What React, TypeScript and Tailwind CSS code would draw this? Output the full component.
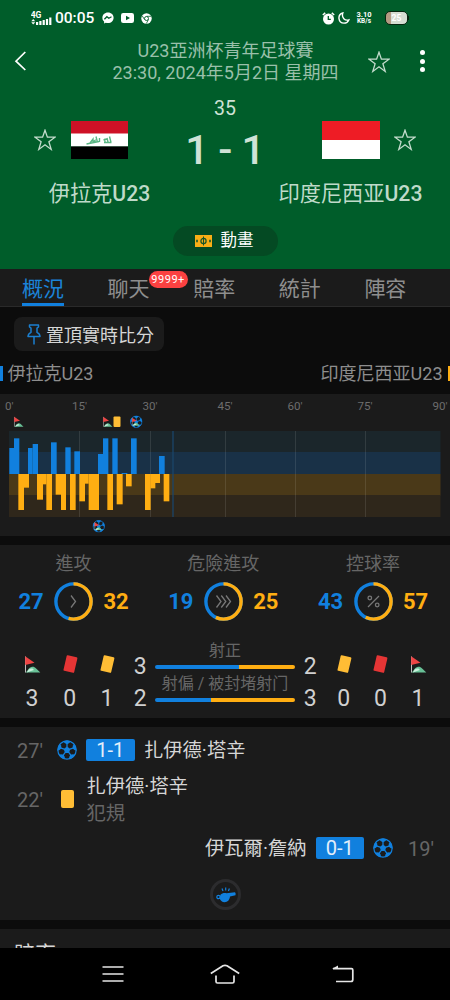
import { clsx } from 'clsx'

const BLUE = '#1180de'
const AMBER = '#ffae12'

// [x, width, height] on a 3x grid, measured from the middle line
const homeBars = [
  [28, 14, 78], [42, 16, 107], [84, 14, 78], [98, 16, 90], [153, 17, 95], [196, 16, 80],
  [223, 17, 68], [294, 15, 60], [309, 16, 107], [337, 16, 107], [365, 17, 3], [393, 17, 107], [477, 17, 54],
]

const awayBars = [
  [55, 17, 108], [72, 15, 41], [111, 18, 77], [129, 10, 31], [139, 17, 108], [167, 16, 62],
  [183, 15, 108], [210, 17, 108], [238, 17, 82], [255, 11, 29], [266, 31, 108], [322, 17, 108],
  [350, 18, 91], [378, 17, 37], [435, 17, 108], [451, 15, 43], [465, 15, 27], [491, 17, 82],
]

const ticks = [
  { x: 5, label: "0'" },
  { x: 72, label: "15'" },
  { x: 142.5, label: "30'" },
  { x: 217.5, label: "45'" },
  { x: 287.5, label: "60'" },
  { x: 357.5, label: "75'" },
  { x: 432.5, label: "90'" },
]

const tabs = [
  { name: '概況', active: true },
  { name: '聊天', badge: '9999+' },
  { name: '賠率' },
  { name: '統計' },
  { name: '陣容' },
]

const rings = [
  { title: '進攻', home: 27, away: 32, icon: 'single' },
  { title: '危險進攻', home: 19, away: 25, icon: 'triple' },
  { title: '控球率', home: 43, away: 57, icon: 'percent' },
]

function Star() {
  return (
    <svg width="22" height="22" viewBox="0 0 22 22" fill="none" stroke="#c3dccd" strokeWidth="1.3" className="shrink-0">
      <path d="M11 1.2 L13.4 8.2 H21 L14.9 12.7 L17.2 20.4 L11 15.8 L4.8 20.4 L7.1 12.7 L1 8.2 H8.6 Z" />
    </svg>
  )
}

function CornerFlag({ size = 17, x, y }: { size?: number; x?: number; y?: number }) {
  return (
    <svg x={x} y={y} width={size} height={size} viewBox="0 0 17 17">
      <path d="M1.5 16.5 C3.5 15.5 4.5 11.5 8 10.8 C11 10.3 12.5 13 16.3 16.5 Z" fill="#69c197" />
      <path d="M3 16.5 C4 13 6 12 8.5 12.5 L10 14 L7 15 Z" fill="#c9f0dc" />
      <path d="M1.5 0.5 V16.5" stroke="#bdbdbd" strokeWidth="1" />
      <path d="M1.2 0.3 L10.5 6.7 L1.2 9 Z" fill="#ef4444" />
    </svg>
  )
}

function Ball({ size = 20, x, y }: { size?: number; x?: number; y?: number }) {
  return (
    <svg x={x} y={y} width={size} height={size} viewBox="0 0 20 20">
      <circle cx="10" cy="10" r="9.2" fill="none" stroke={BLUE} strokeWidth="1.2" />
      <path d="M10 6.6 L13.3 9 L12 12.9 H8 L6.7 9 Z" fill={BLUE} />
      {[0, 72, 144, 216, 288].map((a) => (
        <g key={a} transform={`rotate(${a} 10 10)`}>
          <path d="M10 7 V3" stroke={BLUE} strokeWidth="1.3" />
          <path d="M6.3 1.2 Q10 -0.2 13.7 1.2 L12.4 3 L10 4.2 L7.6 3 Z" fill={BLUE} />
        </g>
      ))}
    </svg>
  )
}

function TiltedCard({ red }: { red?: boolean }) {
  return <div className={clsx('mb-[5px] h-[15.5px] w-[10.5px] rotate-[13deg] rounded-[1px]', red ? 'bg-[#e53535]' : 'bg-[#ffbd35]')} />
}

function StatusBar() {
  return (
    <div className="flex h-9 items-center pl-[31px] pr-[41px] text-white">
      <svg width="21" height="15" viewBox="0 0 21 15" fill="#fff">
        <text x="-0.3" y="6.5" fontSize="8.5" fontWeight="700" fontFamily="Roboto, sans-serif">4G</text>
        <path d="M0.3 10.2 L2.2 8 L4.2 10.2 Z" />
        <path d="M0.3 11.2 L2.2 13.5 L4.2 11.2 Z" />
        <rect x="5" y="11" width="2.2" height="3" />
        <rect x="8.3" y="10" width="2.2" height="4" />
        <rect x="11.6" y="9" width="2.2" height="5" />
        <rect x="14.9" y="8" width="2.2" height="6" />
        <rect x="18.2" y="6.5" width="2.2" height="7.5" />
      </svg>
      <span className="ml-[3px] w-[41px] pt-px text-[15.5px] font-medium leading-none">00:05</span>
      <svg width="12" height="12" viewBox="0 0 12 12" className="ml-[6px]">
        <path d="M6 .4C2.7.4.4 2.8.4 5.7c0 1.6.6 2.9 1.7 3.8v1.9l1.7-.7c.7.2 1.4.3 2.2.3 3.3 0 5.600-2.400 5.600-5.300S9.300.4 6 .4z" fill="#fff" />
        <path d="M2.400 7.200 4.900 4.700l1.900 1.500 2.700-1.500" stroke="#005d2a" strokeWidth="1.300" fill="none" />
      </svg>
      <svg width="13" height="10" viewBox="0 0 13 10" className="ml-[7px]">
        <rect width="13" height="10" rx="2.200" fill="#fff" />
        <path d="M5 2.800v4.400l4-2.200z" fill="#005d2a" />
      </svg>
      <svg width="11" height="11" viewBox="0 0 11 11" className="ml-[7px]">
        <circle cx="5.500" cy="5.500" r="5.200" fill="#fff" />
        <circle cx="5.500" cy="5.500" r="2" fill="none" stroke="#005d2a" strokeWidth=".9" />
        <path d="M5.500 3.300H10M3.500 6.500 1.300 3M7.500 6.500 5.300 10.500" stroke="#005d2a" strokeWidth=".8" />
      </svg>
      <svg width="13" height="13" viewBox="0 0 13 13" className="ml-auto">
        <circle cx="6.500" cy="7" r="5.500" fill="#fff" />
        <path d="M.8 3 3.200.9M12.200 3 9.800.9" stroke="#fff" strokeWidth="1.500" />
        <path d="M6.300 4v3.400h2.500" stroke="#005d2a" strokeWidth="1.300" fill="none" />
      </svg>
      <svg width="12" height="12" viewBox="0 0 12 12" className="ml-[3px]">
        <path d="M4.800 1C2.300 1.700.7 4 1 6.600c.3 2.600 2.400 4.500 5 4.500 2.200 0 4-1.200 4.800-3.200C7 9 3.300 5.800 4.800 1z" fill="none" stroke="#fff" strokeWidth="1.400" />
      </svg>
      <div className="ml-[5px] flex w-[18px] flex-col items-center text-[7.500px] font-bold leading-[7px]">
        <span>3.10</span>
        <span className="text-[6.500px]">KB/s</span>
      </div>
      <div className="ml-3 flex h-[14px] w-[23px] items-center justify-center rounded-[5px] border-[1.500px] border-[#06260f] bg-gradient-to-r from-[#b39a82] from-25% to-[#d5ddd2] to-25% text-[8.500px] font-bold leading-none text-white">
        25
      </div>
      <div className="h-1 w-px bg-[#06260f]" />
    </div>
  )
}

function Header() {
  return (
    <header className="h-[269px] shrink-0 bg-[#005d2a]">
      <StatusBar />
      <div className="flex h-[50px] items-center pl-[14px] pr-[19px]">
        <svg width="13" height="20" viewBox="0 0 13 20" fill="none" stroke="#fff" strokeWidth="1.700">
          <path d="M11.300 1 2 10.200 11.300 19" />
        </svg>
        <div className="ml-[70.500px] w-[256px] pt-[2px] text-center text-[18px] leading-[22px] text-[#9ac0aa]">
          <div>U23亞洲杯青年足球賽</div>
          <div className="whitespace-nowrap">23:30, 2024年5月2日 星期四</div>
        </div>
        <div className="ml-[14.500px] pt-px"><Star /></div>
        <div className="ml-auto flex w-[17px] flex-col items-center gap-[3.500px]">
          <i className="size-[5px] rounded-full bg-white" />
          <i className="size-[5px] rounded-full bg-white" />
          <i className="size-[5px] rounded-full bg-white" />
        </div>
      </div>
      <div className="mt-[11px] h-6 text-center text-[19.500px] leading-6 text-[#cfe2d6]">35</div>
      <div className="flex h-[42px] items-start justify-between px-[34px]">
        <div className="flex items-center gap-[15px]">
          <Star />
          <svg width="57" height="38" viewBox="0 0 57 38">
            <rect width="57" height="13" fill="#ce1126" />
            <rect y="12.500" width="57" height="13" fill="#fff" />
            <rect y="25.500" width="57" height="12.500" fill="#000" />
            <path d="M15.500 23 28 20.500M19 22l3-4v3l2-1.500v2M25 15.500l1.500 6M28.500 17v4M33 21.500h7.500M34 21v-3.500M36 17l1 4M38.500 15.500l1.500 6M32.500 19l3-1" stroke="#58b583" strokeWidth="1.400" fill="none" />
          </svg>
        </div>
        <div className="mt-[8px] whitespace-pre text-[41.500px] font-medium leading-[42px] tracking-[-0.500px] text-[#cfe2d6]">1 - 1</div>
        <div className="flex items-center gap-[14px]">
          <svg width="58" height="38" viewBox="0 0 58 38">
            <rect width="58" height="38" fill="#fff" />
            <rect width="58" height="19" fill="#ee1c25" />
          </svg>
          <Star />
        </div>
      </div>
      <div className="mt-[17.500px] flex h-[26px] justify-between text-[21.200px] leading-[26px] text-[#bfdac9]">
        <div className="w-[199px] text-center">伊拉克<span className="font-medium">U23</span></div>
        <div className="w-[199px] text-center">印度尼西亚<span className="font-medium">U23</span></div>
      </div>
      <div className="mx-auto mt-[19.500px] flex h-[30px] w-[105px] items-center rounded-full bg-[#044a23] pl-[22px]">
        <svg width="17" height="12" viewBox="0 0 17 12">
          <rect width="17" height="12" fill="#f9ae16" />
          <g stroke="#15542a" fill="none">
            <path d="M8.500 1.500v9" strokeWidth="1.100" />
            <circle cx="8.500" cy="6" r="2.600" strokeWidth="1.200" />
            <path d="M2 4.800v2.400M15 4.800v2.400" strokeWidth="1.600" />
          </g>
        </svg>
        <span className="ml-[9px] pt-px text-[16.500px] leading-none text-white">動畫</span>
      </div>
    </header>
  )
}

function Tabs() {
  return (
    <nav className="flex h-[38px] shrink-0 gap-[43.600px] border-b border-[#2a2a2a] bg-[#1b1b1b] pl-[22px]">
      {tabs.map((tab) => (
        <div
          key={tab.name}
          className={clsx(
            'relative w-[42px] whitespace-nowrap border-b-[3px] pt-[2px] text-[21px] leading-[36px]',
            tab.active ? 'border-[#1180de] text-[#1b83d8]' : 'border-transparent text-[#8e8e8e]',
          )}
        >
          {tab.name}
          {tab.badge && (
            <span className="absolute left-[41px] top-[2px] flex h-[17px] w-[39px] items-center justify-center rounded-full bg-[#fb4141] text-[11px] leading-none tracking-[0.500px] text-white">
              {tab.badge}
            </span>
          )}
        </div>
      ))}
    </nav>
  )
}

function Momentum() {
  return (
    <section className="mt-[7px] h-[142px] shrink-0 bg-[#1b1b1b]">
      <svg width="450" height="142" viewBox="0 0 450 142" className="block">
        {ticks.map((t) => (
          <text key={t.label} x={t.x} y="15.500" fontSize="11.600" fill="#6d6d6d">{t.label}</text>
        ))}
        <rect x="9" y="37" width="431.500" height="21.500" fill="#1b262b" />
        <rect x="9" y="58" width="431.500" height="22" fill="#193147" />
        <rect x="9" y="80" width="431.500" height="21.500" fill="#4a3918" />
        <rect x="9" y="101" width="431.500" height="22" fill="#2f271b" />
        {[79.500, 150.500, 225.500, 295.500, 365.500].map((x) => (
          <path key={x} d={`M${x} 37V123`} stroke="#fff" strokeOpacity=".1" />
        ))}
        <path d="M173 37V123" stroke="#1b4569" strokeWidth="1.300" />
        {homeBars.map(([x, w, h]) => (
          <rect key={x} x={x / 3} y={80 - h / 3} width={w / 3} height={h / 3} fill={BLUE} />
        ))}
        {awayBars.map(([x, w, h]) => (
          <rect key={x} x={x / 3} y={80} width={w / 3} height={h / 3} fill={AMBER} />
        ))}
        <CornerFlag x={13.500} y={22.500} size={10.500} />
        <CornerFlag x={102.500} y={22.500} size={10.500} />
        <rect x="113.500" y="22.500" width="7" height="10.500" rx="1" fill="#ffbd35" />
        <Ball x={130} y={21.500} size={12.500} />
        <CornerFlag x={131.500} y={23.500} size={8.500} />
        <Ball x={92.500} y={126} size={12.500} />
        <CornerFlag x={94} y={128} size={8.500} />
      </svg>
    </section>
  )
}

function Ring({ home, away, icon }: { home: number; away: number; icon: string }) {
  const len = 2 * Math.PI * 17.600
  const part = (len * away) / (home + away)
  return (
    <svg width="39" height="39" viewBox="0 0 39 39" fill="none">
      <circle cx="19.500" cy="19.500" r="17.600" stroke={BLUE} strokeWidth="3.400" />
      <circle
        cx="19.500" cy="19.500" r="17.600" stroke={AMBER} strokeWidth="3.400"
        strokeDasharray={`${part} ${len - part}`} transform="rotate(-90 19.500 19.500)"
      />
      <g stroke="#777" strokeWidth="1.300">
        {icon === 'single' && <path d="M17 13.500 21.500 19.500 17 25.500" />}
        {icon === 'triple' && <path d="M12.500 13.500 17 19.500 12.500 25.500M17.300 13.500 21.800 19.500 17.300 25.500M22 13.500 26.500 19.500 22 25.500" />}
        {icon === 'percent' && (
          <>
            <path d="M25 14 14 25" />
            <circle cx="15.800" cy="16" r="1.800" />
            <circle cx="23.200" cy="23" r="1.800" />
          </>
        )}
      </g>
    </svg>
  )
}

function SplitBar({ label, home, away }: { label: string; home: number; away: number }) {
  const total = home + away
  return (
    <div className="h-[32.500px]">
      <div className="whitespace-nowrap text-center text-[16px] leading-[18px] text-[#666]">{label}</div>
      <div className="mt-[5px] flex h-1 overflow-hidden rounded-full">
        <div className="bg-[#1180de]" style={{ width: `${(home / total) * 100}%` }} />
        <div className="flex-1 bg-[#ffae12]" />
      </div>
    </div>
  )
}

function Stats() {
  return (
    <section className="mt-[9px] h-[173px] shrink-0 bg-[#1b1b1b]">
      <div className="flex justify-between pl-[18.500px] pr-[22px] pt-[8px]">
        {rings.map((r) => (
          <div key={r.title} className="w-[110px]">
            <div className="text-center text-[18px] leading-[22px] text-[#666]">{r.title}</div>
            <div className="mt-[7px] flex items-center justify-between text-[22px] font-bold leading-none">
              <span className="w-[25px] pt-px text-[#1180de]">{r.home}</span>
              <Ring home={r.home} away={r.away} icon={r.icon} />
              <span className="w-[25px] pt-px text-[#ffae12]">{r.away}</span>
            </div>
          </div>
        ))}
      </div>
      <div className="mt-[21px] flex px-[13px] text-[23px] leading-[32px] text-[#d0d0d0]">
        <div className="mt-[8px] grid grid-cols-[38px_37.500px_37px_29.500px] grid-rows-[32.500px_32px] place-items-center">
          <div className="mb-[4px]"><CornerFlag /></div>
          <TiltedCard red />
          <TiltedCard />
          <span className="pt-px">3</span>
          <span>3</span>
          <span>0</span>
          <span>1</span>
          <span>2</span>
        </div>
        <div className="w-[140px]">
          <SplitBar label="射正" home={3} away={2} />
          <SplitBar label="射偏 / 被封堵射门" home={2} away={3} />
        </div>
        <div className="mt-[8px] grid grid-cols-[30.500px_36.500px_37px_38px] grid-rows-[32.500px_32px] place-items-center">
          <span className="pt-px">2</span>
          <TiltedCard />
          <TiltedCard red />
          <div className="mb-[4px]"><CornerFlag /></div>
          <span>3</span>
          <span>0</span>
          <span>0</span>
          <span>1</span>
        </div>
      </div>
    </section>
  )
}

function ScoreTag({ score }: { score: string }) {
  return (
    <span className="flex h-[22px] w-[48.500px] items-center justify-center rounded-[2px] bg-[#1180de] text-[20px] leading-none text-[#e3eefa]">
      {score}
    </span>
  )
}

function Events() {
  return (
    <section className="mt-[9px] h-[193px] shrink-0 bg-[#1b1b1b] pl-[17px] pr-[16px] pt-[8px] text-[19.300px] text-[#d6d6d6]">
      <div className="flex h-[30px] items-center">
        <span className="w-[40px] pt-px text-[20px] text-[#666]">27'</span>
        <Ball />
        <span className="ml-[9px]"><ScoreTag score="1-1" /></span>
        <span className="ml-[9.500px] pt-[3px]">扎伊德·塔辛</span>
      </div>
      <div className="mt-[7px] flex h-[54px] items-center">
        <span className="w-[44px] pt-px text-[20px] text-[#666]">22'</span>
        <span className="h-[18px] w-[13px] rounded-[2px] bg-[#ffbd35]" />
        <div className="ml-[12.500px] pt-[3px] leading-[26.500px]">
          <div>扎伊德·塔辛</div>
          <div className="text-[#666]">犯規</div>
        </div>
      </div>
      <div className="mt-[7px] flex h-[30px] items-center justify-end">
        <span className="pt-[3px]">伊瓦爾·詹納</span>
        <span className="ml-[9px] mr-[9px]"><ScoreTag score="0-1" /></span>
        <Ball />
        <span className="w-[41px] pt-px text-right text-[20px] text-[#666]">19'</span>
      </div>
      <div className="mx-auto mt-[16px] flex size-[31px] items-center justify-center rounded-full border-[3px] border-[#2c2c2e]">
        <svg width="20" height="16" viewBox="0 0 20 16" fill={BLUE} className="shrink-0">
          <path d="M4.500 7.800C6 5.900 9 5.500 10.500 6.300L19 5.300Q20 6.500 19.500 8.300L14 9.500C13.700 13 11.500 15.200 8.700 15.200 6 15.200 4.300 13.500 3.500 11Z" />
          <circle cx="2.500" cy="10" r="1.700" fill="none" stroke={BLUE} strokeWidth="1.200" />
          <path d="M6 1.500 7 4M9.700.5V3.500M13.400 1.500 12.400 4" stroke={BLUE} strokeWidth="1.200" />
        </svg>
      </div>
    </section>
  )
}

function NavBar() {
  return (
    <footer className="flex h-[52px] shrink-0 items-center bg-black pl-[102px]">
      <svg width="22" height="18" viewBox="0 0 22 18" stroke="#e6e6e6" strokeWidth="1.700">
        <path d="M.5 2H21.500M.5 9H21.500M.5 16H21.500" />
      </svg>
      <svg width="30" height="20" viewBox="0 0 30 20" fill="none" stroke="#e6e6e6" strokeWidth="1.700" strokeLinejoin="round" className="ml-[86px]">
        <path d="M.8 9.500 13 1.800Q15 .8 17 1.800L29.200 9.500M6 11.500V17.500Q6 19 7.500 19H22.500Q24 19 24 17.500V11.500" />
      </svg>
      <svg width="22" height="18" viewBox="0 0 22 18" fill="none" stroke="#e6e6e6" strokeWidth="1.700" className="ml-[92px]">
        <path d="M1 3.600H19.500Q20.800 3.600 20.800 5V14.500Q20.800 16.500 19 16.500H4" />
        <path d="M0 3.800 6 .5V3.800Z" fill="#e6e6e6" stroke="none" />
      </svg>
    </footer>
  )
}

export default function App() {
  return (
    <div className="flex h-[1000px] w-[450px] flex-col overflow-hidden bg-[#0c0c0c] font-['Roboto','Noto_Sans_CJK_TC',sans-serif]">
      <Header />
      <Tabs />
      <div className="ml-[14px] mt-[10px] flex h-[34px] w-[150px] shrink-0 items-center rounded-lg bg-[#1b1b1b] pl-[13px]">
        <svg width="14" height="21" viewBox="0 0 14 21" fill="none" stroke="#1b7fd0" strokeWidth="1.500" strokeLinejoin="round">
          <path d="M2.500 1H11.500V3L10 4.200V8.300C12 9.300 13 10.500 13 12.500H1C1 10.500 2 9.300 4 8.300V4.200L2.500 3ZM7 12.500V20.500" />
        </svg>
        <span className="ml-[5px] pt-[3px] text-[18px] leading-none text-[#d6d6d6]">置頂實時比分</span>
      </div>
      <div className="mt-[9px] flex h-[27px] shrink-0 items-center text-[18px] leading-none text-[#8e8e8e]">
        <i className="h-[15px] w-[2.500px] bg-[#1180de]" />
        <span className="ml-[5px] pt-px">伊拉克U23</span>
        <span className="ml-auto mr-[5px] pt-px">印度尼西亚U23</span>
        <i className="h-[15px] w-[2.500px] bg-[#ffae12]" />
      </div>
      <Momentum />
      <Stats />
      <Events />
      <section className="mt-[9px] min-h-0 flex-1 overflow-hidden bg-[#1b1b1b] pl-[14px] pt-[12px] text-[21px] leading-[26px] text-[#d6d6d6]">賠率</section>
      <NavBar />
    </div>
  )
}
